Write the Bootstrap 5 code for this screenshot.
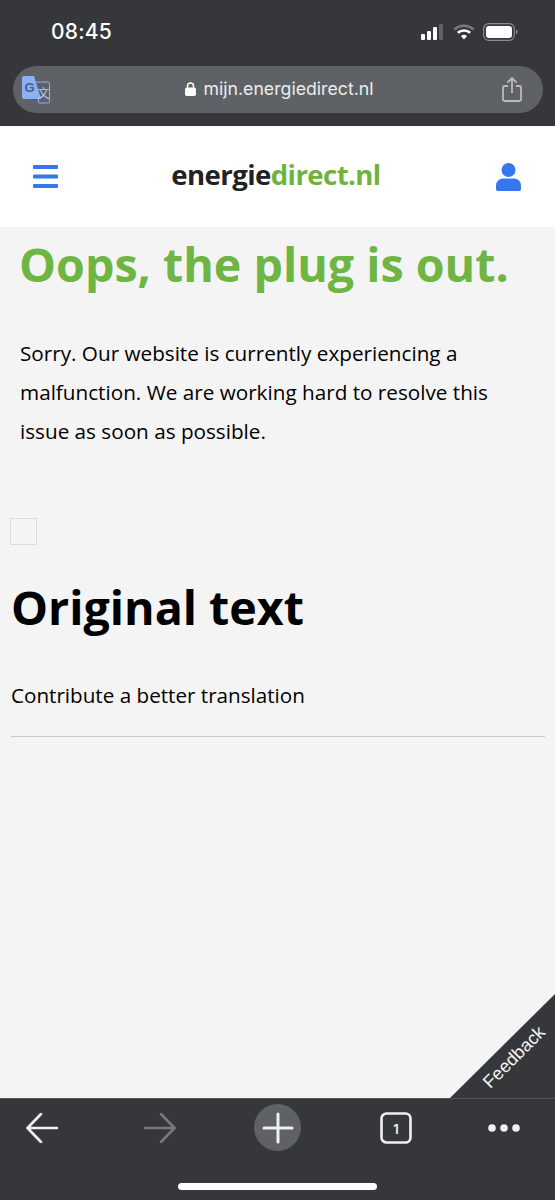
<!DOCTYPE html>
<html lang="en">
  <head>
    <meta charset="UTF-8" />
    <title>energiedirect.nl</title>
    <link
      href="https://cdn.jsdelivr.net/npm/bootstrap@5.3.2/dist/css/bootstrap.min.css"
      rel="stylesheet"
    />
    <style>
      html, body { margin: 0; height: 1200px; overflow: hidden; }
      body { font-family: "Open Sans", sans-serif; background: #f4f4f4; color: #000; }
      .phone { width: 555px; height: 1200px; }
      .top-chrome { height: 126px; background: #36373a; padding: 0 13px; color: #fff; }
      .status-row { height: 66px; padding: 0 24px 3px 38px; font-family: Inter, "Liberation Sans", sans-serif; }
      .clock { font-size: 21px; font-weight: 500; letter-spacing: .2px; }
      .url-bar { height: 47px; width: 530px; border-radius: 24px; background: #5e6165; padding: 0 21px 0 9px; }
      .url-text { font-family: Inter, "Liberation Sans", sans-serif; font-size: 17.7px; color: #eceded; padding-left: 6px; }
      .site-head { height: 101px; background: #fff; padding: 0 34px 0 33px; }
      .brand { font-family: "Open Sans", sans-serif; font-weight: 700; font-size: 27.6px; letter-spacing: -.6px; line-height: 1; color: #222; padding: 0 2px 4px 0; }
      .brand span { color: #6db33f; }
      .page-main { position: relative; }
      .oops { font-size: 46.6px; font-weight: 700; color: #6fb544; line-height: 1.2; margin: 10px 0 0 19px; white-space: nowrap; }
      .sorry { font-size: 20.7px; line-height: 39px; margin: 41px 20px 0 20px; }
      .broken-img { width: 27px; height: 27px; border: 1px solid #dcdcdc; margin: 67px 0 0 10px; }
      .orig-title { font-size: 46.6px; font-weight: 700; line-height: 1.2; margin: 35px 0 0 11px; }
      .contribute { font-size: 20.65px; line-height: 30px; margin: 44px 0 0 11px; }
      .thin-rule { height: 1px; background: #c9c9c9; margin: 26px 10px 0 11px; }
      .feedback-tab { position: absolute; right: 0; bottom: 0; width: 105px; height: 104px; background: #36373a; clip-path: polygon(100% 0, 100% 100%, 0 100%); }
      .feedback-tab span { position: absolute; left: 24px; top: 53px; width: 80px; font-family: "Liberation Sans", sans-serif; font-size: 18px; line-height: 20px; color: #f4f4f4; transform: rotate(-45deg); text-align: center; }
      .bottom-chrome { height: 102px; background: #36373a; border-top: 1px solid #55565a; position: relative; }
      .tool-row { height: 57px; padding-left: 24px; }
      .tool-slot { width: 36px; height: 36px; }
      .plus-wrap { width: 47px; height: 47px; border-radius: 50%; background: #5e6165; }
      .gap-fwd { margin-left: 81.5px; }
      .gap-mid { margin-left: 76.5px; }
      .gap-more { margin-left: 72.5px; }
      .home-pill { position: absolute; left: 178px; top: 84px; width: 199px; height: 7px; border-radius: 4px; background: #fff; }
    </style>
  </head>
  <body>
    <div class="phone d-flex flex-column">
      <div class="top-chrome flex-shrink-0">
        <div class="status-row d-flex justify-content-between align-items-center">
          <div class="clock">08:45</div>
          <div class="d-flex align-items-center gap-2 status-icons">
            <svg width="24" height="16" viewBox="0 0 24 16">
              <rect x="0" y="10" width="4" height="6" rx="1" fill="#fff" />
              <rect x="6" y="7" width="4" height="9" rx="1" fill="#fff" />
              <rect x="12" y="3" width="4" height="13" rx="1" fill="#fff" />
              <rect x="18" y="0" width="4" height="16" rx="1" fill="#5e6165" />
            </svg>
            <svg width="22" height="16" viewBox="0 0 22 16">
              <path d="M1.500 5.500a14 14 0 0 1 19 0" fill="none" stroke="#77797c" stroke-width="2.600" />
              <path d="M4.800 8.800a9.500 9.500 0 0 1 12.400 0" fill="none" stroke="#fff" stroke-width="2.600" />
              <path d="M8 12a4.600 4.600 0 0 1 6 0l-3 3.500z" fill="#fff" />
            </svg>
            <svg width="35" height="18" viewBox="0 0 35 18">
              <rect x=".7" y=".7" width="30.600" height="16.600" rx="5" fill="none" stroke="#8b8c8e" stroke-width="1.200" />
              <rect x="3" y="3" width="26" height="12" rx="3" fill="#fff" />
              <path d="M33 6.500c1.200.4 1.600 1.400 1.600 2.500s-.4 2.100-1.600 2.500z" fill="#8b8c8e" />
            </svg>
          </div>
        </div>
        <div class="url-bar d-flex align-items-center">
          <svg width="28" height="28" viewBox="0 0 28 28" class="flex-shrink-0">
            <path d="M12 6h14a1.500 1.500 0 0 1 1.500 1.500v18a1.500 1.500 0 0 1-1.500 1.500h-9z" fill="#5e6165" stroke="#8fb3ee" stroke-width="1" />
            <path d="M2 0h10l7 23H2a2 2 0 0 1-2-2V2a2 2 0 0 1 2-2z" fill="#8ab0f5" />
            <text x="2.500" y="16" font-family="Liberation Sans, sans-serif" font-size="13" font-weight="700" fill="#4a5f86">G</text>
            <text x="15.500" y="22" font-family="Noto Sans CJK SC, sans-serif" font-size="12" fill="#b9cdf2">文</text>
          </svg>
          <div class="flex-grow-1 d-flex justify-content-center align-items-center gap-2 url-text">
            <svg width="11" height="14" viewBox="0 0 11 14">
              <path d="M2.500 6V4a3 3 0 0 1 6 0v2" fill="none" stroke="#fff" stroke-width="1.500" />
              <rect x="0" y="5.500" width="11" height="8.500" rx="1.800" fill="#fff" />
            </svg>
            <span>mijn.energiedirect.nl</span>
          </div>
          <svg width="20" height="25" viewBox="0 0 20 25" class="flex-shrink-0">
            <path d="M6 9H2.500A1.500 1.500 0 0 0 1 10.500v12A1.500 1.500 0 0 0 2.500 24h15a1.500 1.500 0 0 0 1.500-1.500v-12A1.500 1.500 0 0 0 17.500 9H14" fill="none" stroke="#b9babc" stroke-width="1.800" />
            <path d="M10 16V1.500M5.500 5.500 10 1l4.500 4.500" fill="none" stroke="#b9babc" stroke-width="1.800" />
          </svg>
        </div>
      </div>

      <div class="site-head flex-shrink-0 d-flex justify-content-between align-items-center">
        <svg width="25" height="23" viewBox="0 0 25 23">
          <rect x="0" y="0" width="25" height="4" rx="1" fill="#3478f0" />
          <rect x="0" y="9.500" width="25" height="4" rx="1" fill="#3478f0" />
          <rect x="0" y="19" width="25" height="4" rx="1" fill="#3478f0" />
        </svg>
        <div class="brand">energie<span>direct.nl</span></div>
        <svg width="25" height="28" viewBox="0 0 25 28">
          <circle cx="12.500" cy="7" r="7" fill="#3478f0" />
          <path d="M7 15.500h11a7 7 0 0 1 7 7V26a2 2 0 0 1-2 2H2a2 2 0 0 1-2-2v-3.500a7 7 0 0 1 7-7z" fill="#3478f0" />
        </svg>
      </div>

      <main class="page-main flex-grow-1">
        <h1 class="oops">Oops, the plug is out.</h1>
        <p class="sorry mb-0">Sorry. Our website is currently experiencing a malfunction. We are working hard to resolve this issue as soon as possible.</p>
        <div class="broken-img"></div>
        <h2 class="orig-title">Original text</h2>
        <div class="contribute">Contribute a better translation</div>
        <div class="thin-rule"></div>
        <div class="feedback-tab"><span>Feedback</span></div>
      </main>

      <div class="bottom-chrome flex-shrink-0">
        <div class="tool-row d-flex align-items-center">
          <div class="tool-slot d-flex align-items-center justify-content-center">
            <svg width="32" height="30" viewBox="0 0 32 30"><path d="M31 15H2M15 1 1.500 15 15 29" fill="none" stroke="#f0f0f1" stroke-width="2.600" stroke-linecap="round" stroke-linejoin="round" /></svg>
          </div>
          <div class="tool-slot gap-fwd d-flex align-items-center justify-content-center">
            <svg width="32" height="30" viewBox="0 0 32 30"><path d="M1 15h29M17 1l13.500 14L17 29" fill="none" stroke="#77787b" stroke-width="2.600" stroke-linecap="round" stroke-linejoin="round" /></svg>
          </div>
          <div class="plus-wrap gap-mid d-flex align-items-center justify-content-center">
            <svg width="32" height="32" viewBox="0 0 32 32"><path d="M16 2v28M2 16h28" fill="none" stroke="#f0f0f1" stroke-width="3" stroke-linecap="round" /></svg>
          </div>
          <div class="tool-slot gap-mid d-flex align-items-center justify-content-center">
            <svg width="32" height="32" viewBox="0 0 32 32">
              <rect x="1.500" y="1.500" width="29" height="29" rx="5" fill="none" stroke="#f0f0f1" stroke-width="2.600" />
              <text x="16" y="21.500" text-anchor="middle" font-family="Inter, sans-serif" font-size="13" font-weight="600" fill="#f0f0f1">1</text>
            </svg>
          </div>
          <div class="tool-slot gap-more d-flex align-items-center justify-content-center">
            <svg width="34" height="10" viewBox="0 0 34 10">
              <circle cx="5" cy="5" r="3.800" fill="#f0f0f1" />
              <circle cx="17" cy="5" r="3.800" fill="#f0f0f1" />
              <circle cx="29" cy="5" r="3.800" fill="#f0f0f1" />
            </svg>
          </div>
        </div>
        <div class="home-pill"></div>
      </div>
    </div>
    <script src="https://cdn.jsdelivr.net/npm/bootstrap@5.3.2/dist/js/bootstrap.bundle.min.js"></script>
  </body>
</html>
